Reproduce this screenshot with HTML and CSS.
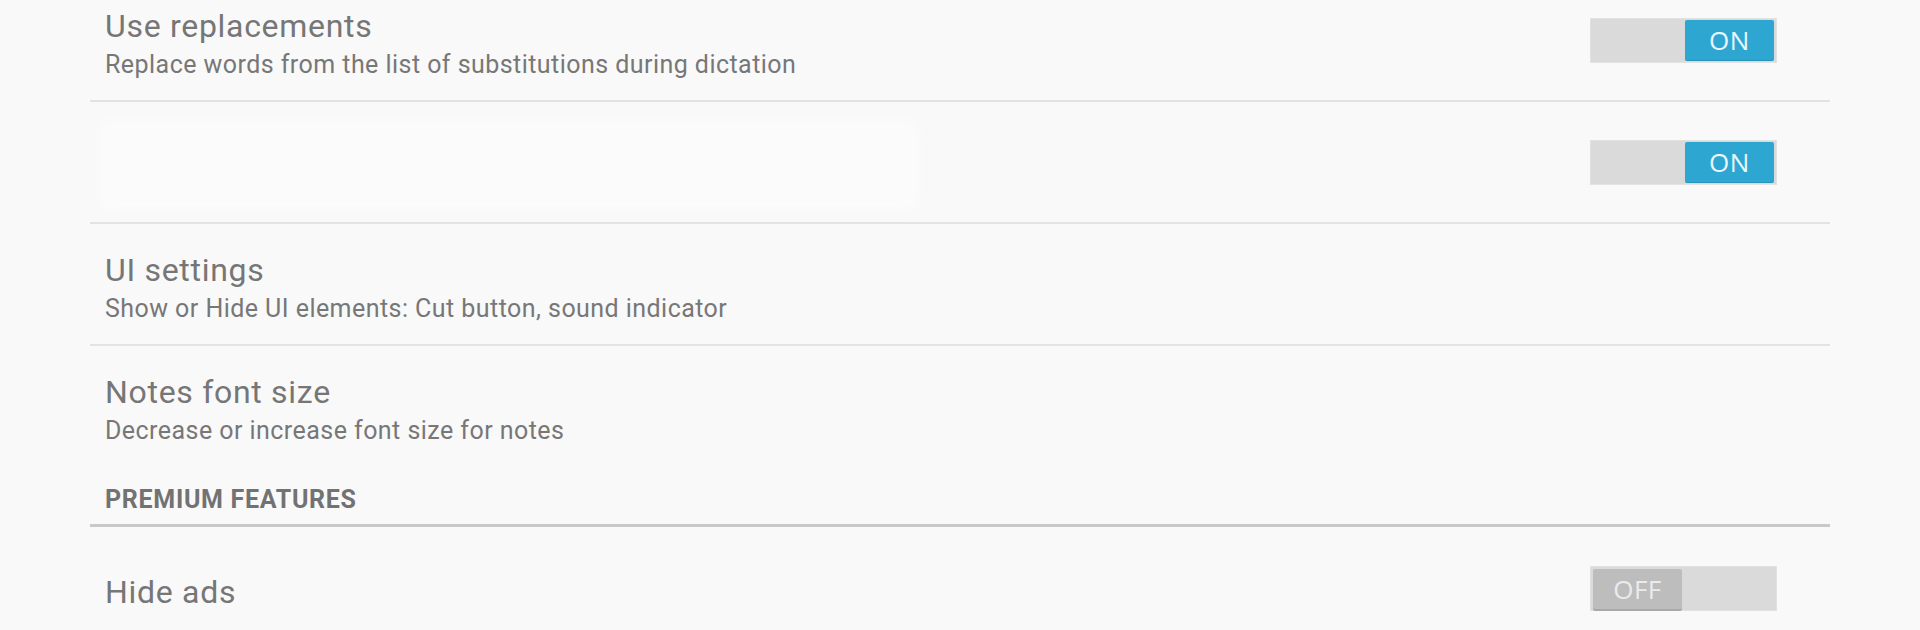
FILE: index.html
```html
<!DOCTYPE html>
<html lang="en">
<head>
<meta charset="utf-8">
<title>Settings</title>
<link rel="stylesheet" href="styles.css">
</head>
<body>
<div class="prefs">
  <div class="row divided">
    <div class="text">
      <div class="title">Use replacements</div>
      <div class="summary">Replace words from the list of substitutions during dictation</div>
    </div>
    <div class="switch on"><span class="thumb">ON</span></div>
  </div>
  <div class="row divided">
    <div class="text">
      <div class="hidden-block"></div>
    </div>
    <div class="switch on"><span class="thumb">ON</span></div>
  </div>
  <div class="row divided">
    <div class="text">
      <div class="title">UI settings</div>
      <div class="summary">Show or Hide UI elements: Cut button, sound indicator</div>
    </div>
  </div>
  <div class="row">
    <div class="text">
      <div class="title">Notes font size</div>
      <div class="summary">Decrease or increase font size for notes</div>
    </div>
  </div>
  <div class="category">PREMIUM FEATURES</div>
  <div class="row last">
    <div class="text single">
      <div class="title">Hide ads</div>
    </div>
    <div class="switch off"><span class="thumb">OFF</span></div>
  </div>
</div>
</body>
</html>
```

FILE: styles.css
```css
html, body {
  margin: 0;
  padding: 0;
  background: #f9f9f9;
  height: 630px;
  overflow: hidden;
}
body {
  font-family: Roboto, "Noto Sans", "DejaVu Sans", sans-serif;
}
.prefs {
  margin: -20px 90px 0 90px;
  display: flex;
  flex-direction: column;
}
.row {
  display: flex;
  align-items: center;
  height: 120px;
  padding: 0 53px 0 15px;
}
.row.divided {
  border-bottom: 2px solid #e3e3e3;
}
.row.last {
  height: 123px;
}
.text {
  flex: 1;
  min-width: 0;
  padding-top: 6px;
}
.text.single {
  padding-top: 7px;
}
.title {
  font-size: 32px;
  line-height: 38px;
  letter-spacing: 0.7px;
  color: #767676;
}
.summary {
  font-size: 25px;
  line-height: 30px;
  letter-spacing: 0.45px;
  margin-top: 5px;
  color: #777777;
}
.hidden-block {
  width: 820px;
  height: 90px;
  margin-left: -6px;
  background: #fbfbfb;
  border-radius: 10px;
  filter: blur(6px);
}
.category {
  font-size: 25px;
  font-weight: bold;
  line-height: 30px;
  letter-spacing: 0.7px;
  color: #727272;
  padding: 19px 15px 9px;
  border-bottom: 3px solid #c9c9c9;
}
.switch {
  width: 187px;
  height: 45px;
  box-sizing: border-box;
  background: #dadada;
  border: 1px solid #e2e2e2;
  display: flex;
  align-items: center;
  padding: 0 2px;
}
.switch.on {
  justify-content: flex-end;
}
.switch.off {
  justify-content: flex-start;
}
.thumb {
  width: 89px;
  height: 40px;
  border-radius: 2px;
  display: flex;
  align-items: center;
  justify-content: center;
  font-family: "Open Sans", "Noto Sans", Roboto, sans-serif;
  font-size: 26px;
  letter-spacing: 0.5px;
}
.switch.on .thumb {
  background: #2da6d1;
  color: #e9f6fb;
  box-shadow: 0 1px 0 #2a93b8;
}
.switch.off .thumb {
  background: #bdbdbd;
  color: #ebebeb;
  box-shadow: 0 2px 0 #a9a9a9;
}
```
